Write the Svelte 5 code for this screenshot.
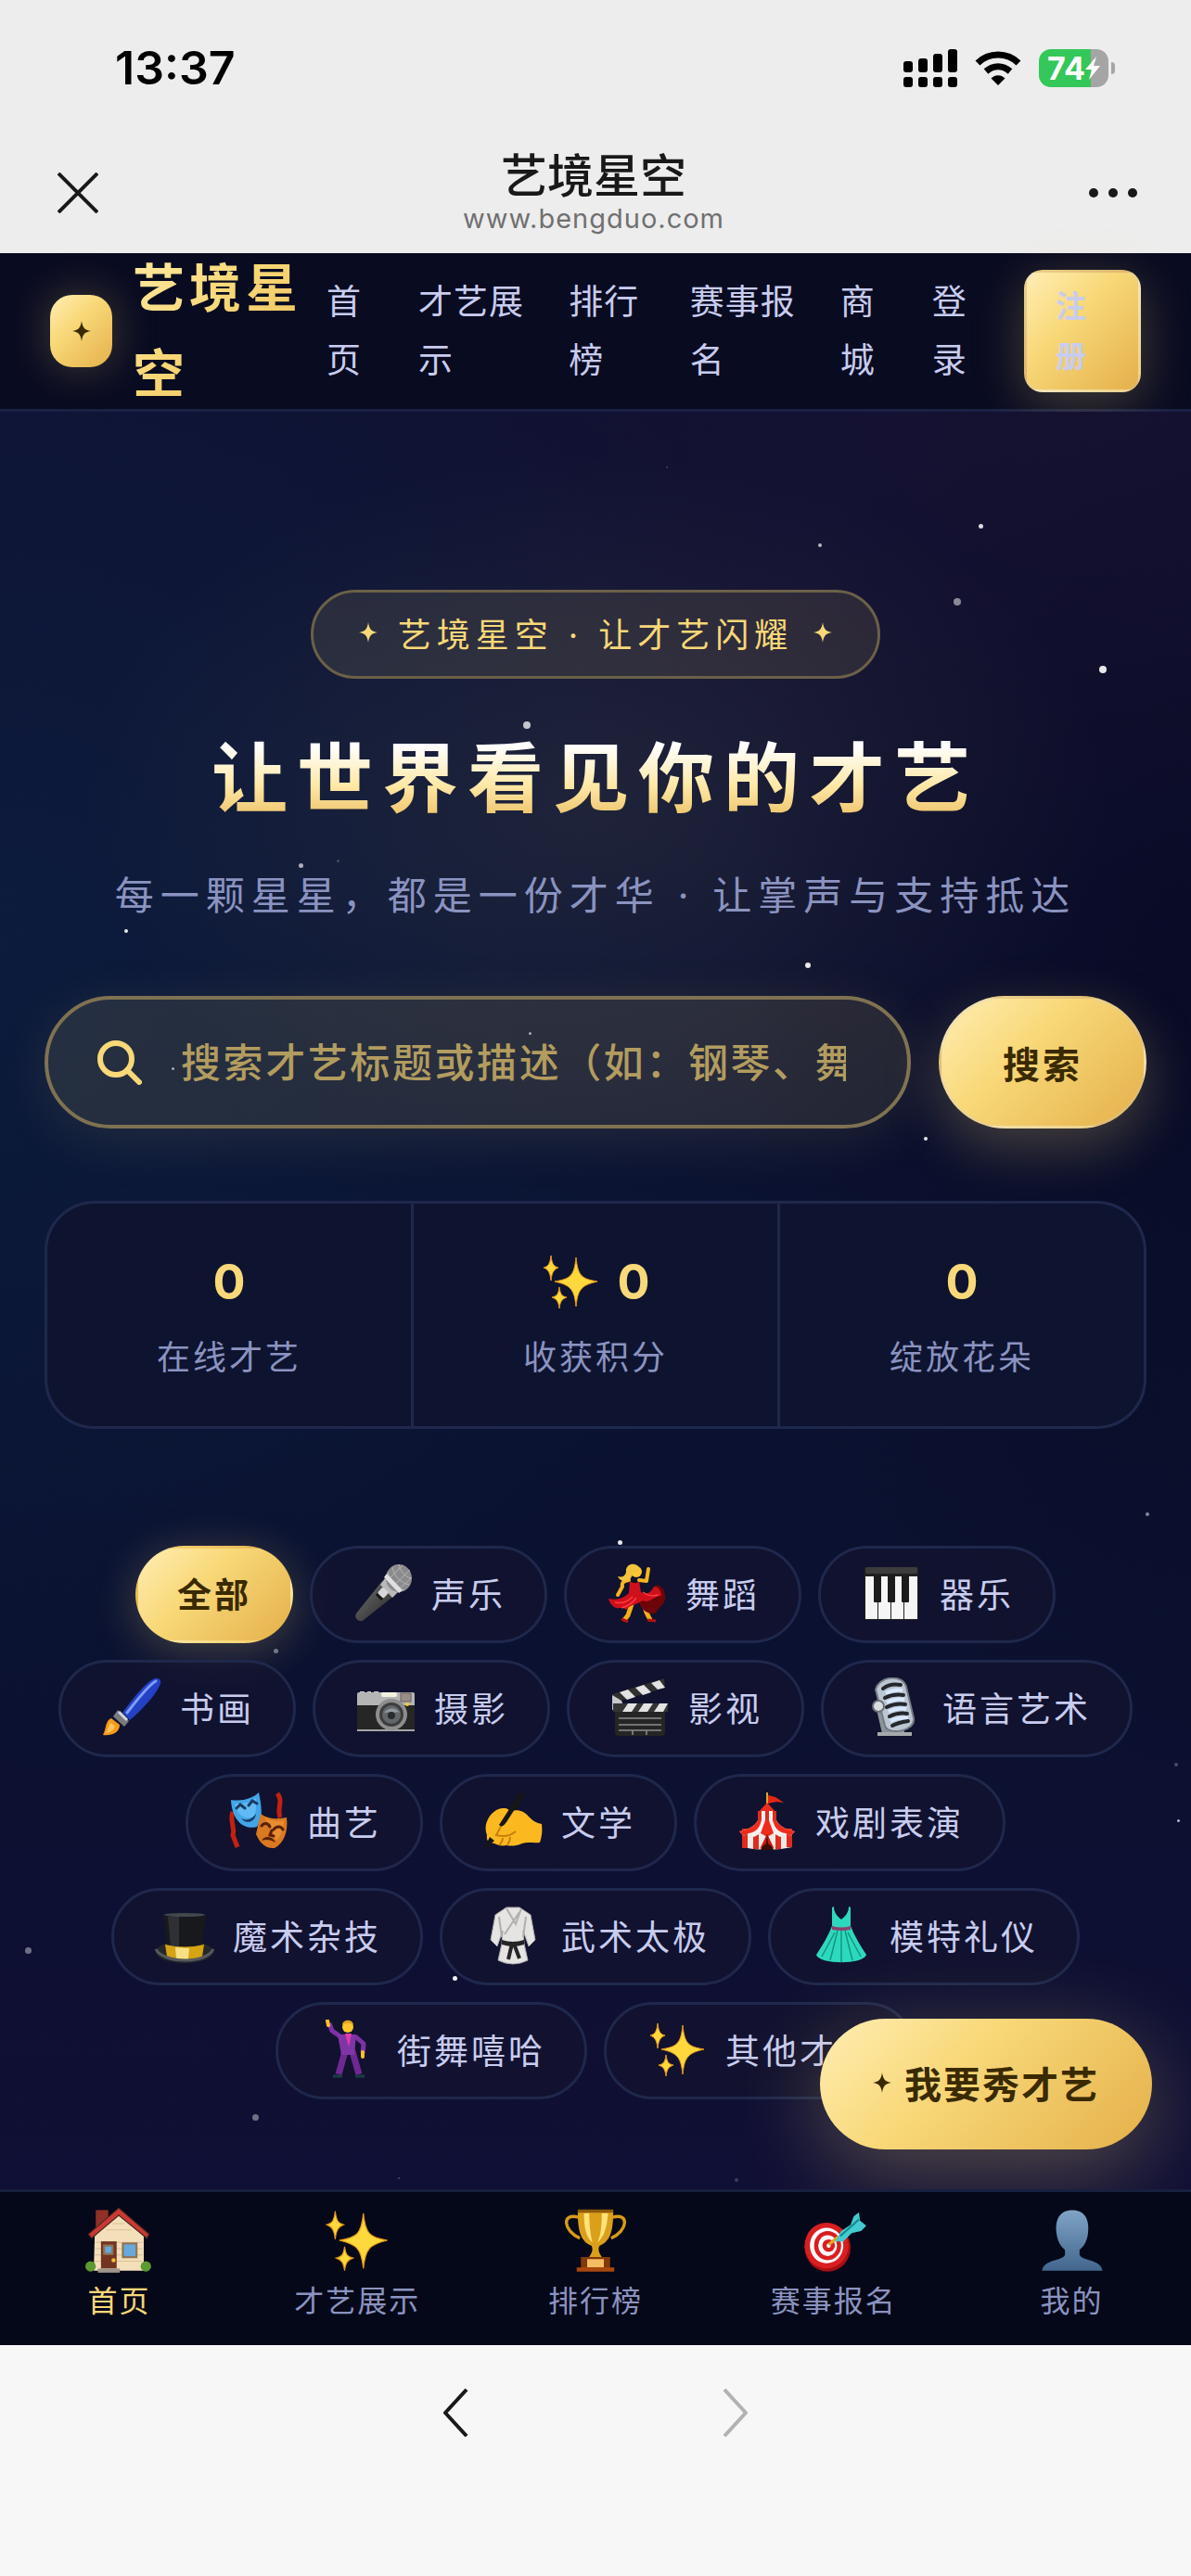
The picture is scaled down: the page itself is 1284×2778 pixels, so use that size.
<script lang="ts">
	interface Star {
		x: number;
		y: number;
		size: number;
		opacity: number;
	}

	const navLinks = ['首页', '才艺展示', '排行榜', '赛事报名', '商城', '登录'];

	const stats = [
		{ label: '在线才艺', value: 0, icon: '' },
		{ label: '收获积分', value: 0, icon: 'sparkles' },
		{ label: '绽放花朵', value: 0, icon: '' }
	];

	const categories = [
		{ name: '全部', icon: '' },
		{ name: '声乐', icon: 'mic' },
		{ name: '舞蹈', icon: 'dancer' },
		{ name: '器乐', icon: 'piano' },
		{ name: '书画', icon: 'brush' },
		{ name: '摄影', icon: 'camera' },
		{ name: '影视', icon: 'clapper' },
		{ name: '语言艺术', icon: 'studio' },
		{ name: '曲艺', icon: 'masks' },
		{ name: '文学', icon: 'writing' },
		{ name: '戏剧表演', icon: 'circus' },
		{ name: '魔术杂技', icon: 'hat' },
		{ name: '武术太极', icon: 'gi' },
		{ name: '模特礼仪', icon: 'dress' },
		{ name: '街舞嘻哈', icon: 'disco' },
		{ name: '其他才艺', icon: 'sparkles' }
	];

	const tabs = [
		{ name: '首页', icon: 'house' },
		{ name: '才艺展示', icon: 'sparkles' },
		{ name: '排行榜', icon: 'trophy' },
		{ name: '赛事报名', icon: 'target' },
		{ name: '我的', icon: 'person' }
	];

	// x and y are percentages of the sky
	const stars: Star[] = [
		{ x: 55.9, y: 3.1, size: 2, opacity: 0.2 },
		{ x: 82.2, y: 6.3, size: 5, opacity: 0.85 },
		{ x: 68.7, y: 7.4, size: 4, opacity: 0.7 },
		{ x: 80.1, y: 10.5, size: 8, opacity: 0.5 },
		{ x: 92.3, y: 14.3, size: 8, opacity: 0.9 },
		{ x: 43.9, y: 17.4, size: 8, opacity: 0.75 },
		{ x: 25.1, y: 25.4, size: 5, opacity: 0.65 },
		{ x: 28.3, y: 25.2, size: 3, opacity: 0.2 },
		{ x: 46.6, y: 27.8, size: 4, opacity: 0.15 },
		{ x: 10.4, y: 29.1, size: 4, opacity: 0.9 },
		{ x: 67.6, y: 31, size: 6, opacity: 0.9 },
		{ x: 44.4, y: 34.9, size: 3, opacity: 0.6 },
		{ x: 14.4, y: 36.9, size: 3, opacity: 0.6 },
		{ x: 77.6, y: 40.8, size: 4, opacity: 0.9 },
		{ x: 96.2, y: 61.9, size: 4, opacity: 0.5 },
		{ x: 51.9, y: 63.5, size: 5, opacity: 0.9 },
		{ x: 23, y: 69.6, size: 5, opacity: 0.4 },
		{ x: 98.6, y: 76, size: 4, opacity: 0.25 },
		{ x: 98.8, y: 79.2, size: 3, opacity: 0.7 },
		{ x: 2.1, y: 86.4, size: 7, opacity: 0.4 },
		{ x: 38, y: 88, size: 5, opacity: 0.95 },
		{ x: 21.2, y: 95.8, size: 7, opacity: 0.4 },
		{ x: 33.4, y: 99.3, size: 2, opacity: 0.25 },
		{ x: 61.7, y: 99.4, size: 4, opacity: 0.2 }
	];

	let activeCategory = $state('全部');
	let activeTab = $state('首页');
	let keyword = $state('');

	function handleSearch(event: Event) {
		event.preventDefault();
		keyword = keyword.trim();
	}
</script>

{#snippet emoji(name: string)}
	<svg class="emoji" viewBox="0 0 64 64" aria-hidden="true">
		{#if name === 'sparkles'}
			<g fill="#ffd93b" stroke="#e8961c" stroke-width="1">
				<path d="M38 6c2 20 6 23 23 26-17 4-21 8-23 27-2-19-6-23-23-27 17-3 21-6 23-26z" />
				<path d="M11 4c1 9 3 12 8 13-5 2-7 5-8 14-1-9-3-12-8-14 5-1 7-4 8-13z" />
				<path d="M20 38c1 8 3 10 8 11-5 2-7 4-8 12-1-8-3-10-8-12 5-1 7-3 8-11z" />
			</g>
		{:else if name === 'mic'}
			<defs>
				<linearGradient id="mic-body" x1="0" y1="0" x2="1" y2="1">
					<stop offset="0" stop-color="#777" />
					<stop offset="0.5" stop-color="#4b4b4b" />
					<stop offset="1" stop-color="#222" />
				</linearGradient>
			</defs>
			<path d="M31 19 45 34 11 61c-4 4-11-2-8-7z" fill="url(#mic-body)" />
			<path d="m34 16 14 15-6 6-13-14z" fill="#b9b9bb" />
			<ellipse cx="49" cy="16" rx="14" ry="15" fill="#8b8b8d" />
			<path d="M37 9c2 10 9 18 18 20M42 4c2 10 9 17 18 19M49 1c1 7 6 13 13 15M37 18 53 2M42 25 61 7M48 29 63 15" fill="none" stroke="#b4b4b6" stroke-width="1" />
			<path d="m36 11 17 18-4 3-16-17z" fill="#e0e0e2" />
			<rect x="28" y="27" width="9" height="9" rx="2" fill="#d6d6d8" transform="rotate(42 32 31)" />
			<path d="m25 33 6 6" stroke="#161616" stroke-width="3" />
		{:else if name === 'dancer'}
			<path d="m27 41-5 15-4 5M38 40l4 13 4 8" fill="none" stroke="#f4ae19" stroke-width="5" stroke-linejoin="round" />
			<path d="m15 60 7 3M43 61l9 1" stroke="#b3130e" stroke-width="3" />
			<path d="M34 40c1 10 9 15 18 14 2-7 12-10 10-20-1-8-7-12-11-10-2 9-8 12-16 13z" fill="#6d0508" />
			<path d="M24 19c4 3 7 3 10 0l2 12c5 3 10 2 14-6 5 0 8 5 8 10-8-1-12 9-20 5-7 5-13 4-18 10-4-4-9 0-13-3-3-2-5-5-6-9 9 2 16 0 22-6z" fill="#cf101b" />
			<path d="M8 42c8 2 14-1 19-6M15 48c7-2 13-6 16-11M55 34c-7 2-13 0-17-3" fill="none" stroke="#ff3b3e" stroke-width="1.5" />
			<path d="M23 18c-6 1-8 3-7 7l-5 9M34 18l8 1 2-13" fill="none" stroke="#f7b51f" stroke-width="4" stroke-linecap="round" stroke-linejoin="round" />
			<circle cx="31" cy="9" r="6" fill="#ffc62e" />
			<path d="M34 4c-5-6-15-3-14 5-1 6-6 6-9 5 3 7 13 7 15 0 1-3 4-5 8-6z" fill="#f2c33d" />
		{:else if name === 'piano'}
			<rect x="3" y="4" width="58" height="57" rx="2" fill="#202020" />
			<rect x="4" y="4" width="56" height="7" rx="2" fill="#3c3c3c" />
			<g fill="#f5f5f5">
				<rect x="4" y="14" width="13" height="46" />
				<rect x="18" y="14" width="13" height="46" />
				<rect x="32" y="14" width="13" height="46" />
				<rect x="46" y="14" width="14" height="46" />
			</g>
			<g fill="#1c1c1c">
				<rect x="13" y="13" width="8" height="29" rx="1" />
				<rect x="28" y="13" width="8" height="29" rx="1" />
				<rect x="43" y="13" width="8" height="29" rx="1" />
			</g>
		{:else if name === 'brush'}
			<path d="M22 38C34 22 48 4 57 1c5-1 8 3 5 8-5 11-19 26-32 37z" fill="#2440c4" />
			<path d="M27 38C38 24 50 8 58 4" fill="none" stroke="#7f9bff" stroke-width="3" stroke-linecap="round" />
			<path d="m17 35 12 12-5 6-12-11z" fill="#777b80" />
			<path d="m18 37 9 9" stroke="#d4d7da" stroke-width="3" />
			<path d="M10 44c-7 3-5 11-9 18 9 1 18-2 18-11z" fill="#f79a1c" />
			<path d="M9 49c-2 4-2 7-5 11 5-1 9-3 10-8z" fill="#ffc558" />
		{:else if name === 'camera'}
			<path d="M4 15h5v3h3v-3h4v3h3v-3h5v6H4z" fill="#c6c6c4" />
			<rect x="1" y="20" width="62" height="38" rx="2" fill="#262626" />
			<path d="M1 18q0-2 2-2h58q2 0 2 2v12H1z" fill="#b4b5b4" />
			<rect x="27" y="16" width="17" height="5" rx="2" fill="#f4f1df" />
			<rect x="48" y="17" width="11" height="9" fill="#9a8f88" stroke="#6a615c" />
			<path d="M1 57h62" stroke="#a5a5a5" stroke-width="2" />
			<ellipse cx="38" cy="40" rx="17" ry="17" fill="#8e8e8e" />
			<circle cx="38" cy="40" r="13" fill="#3d3d3d" />
			<circle cx="38" cy="40" r="10" fill="#62676b" />
			<path d="M30 38c5-6 13-6 17 0-4-2-6 1-9 0s-5 0-8 0z" fill="#94999d" />
			<circle cx="38" cy="41" r="4" fill="#292b2d" />
			<circle cx="55" cy="29" r="2" fill="#ffcc2f" />
		{:else if name === 'clapper'}
			<path d="m2 18 56-17 1 10L5 27z" fill="#303030" />
			<path d="m10 16 9-3 8 8-9 3zM27 11l9-3 8 8-9 3zM44 6l9-3 6 8-8 2z" fill="#e3e3e3" />
			<path d="M2 19 12 25l4 10H2z" fill="#c6c8ca" />
			<rect x="5" y="34" width="54" height="29" rx="4" fill="#252525" />
			<path d="M3 28h59v9H3z" fill="#353535" />
			<path d="M19 28h10l-6 9H13zM36 28h10l-6 9H30zM53 28h9l-5 9H47z" fill="#e3e3e3" />
			<path d="M9 44h46M9 51h46M9 57h46M24 57v5M39 57v5" stroke="#8d8d8d" stroke-width="1.5" />
		{:else if name === 'studio'}
			<path d="M15 32 21 58h22" fill="none" stroke="#8d939a" stroke-width="5" />
			<path d="M14 59h37v4H14z" fill="#a7a9ad" />
			<path d="M12 13C16-2 41-4 45 10l8 34c2 14-27 19-31 8z" fill="#bcc6d2" stroke="#737b84" stroke-width="2" />
			<path d="M23 17c6-3 13-4 18-3M24 27c6-3 14-4 19-3M26 37c6-3 14-4 19-3M28 47c6-3 13-4 19-3" fill="none" stroke="#d8e8ff" stroke-width="4" />
			<g fill="none" stroke="#24282d" stroke-width="4" stroke-linecap="round">
				<path d="M20 12c5-4 13-5 19-4M22 22c6-3 14-4 20-3M24 32c6-3 14-4 20-3M27 42c6-3 13-4 19-3M30 52c5-3 11-4 17-5" />
			</g>
			<circle cx="15" cy="31" r="6" fill="#dadde0" stroke="#6b7075" stroke-width="2" />
		{:else if name === 'masks'}
			<path d="M4 22c-4 9 3 18 0 25l5 13M52 2c7 9-1 16 3 26" fill="none" stroke="#c52110" stroke-width="5" />
			<path d="M2 9C15 11 26 7 32 1c3 15 5 28-2 37C17 42 3 32 2 9z" fill="#42a5e8" />
			<path d="M6 13c10 1 18-2 23-6 0 8 1 15-3 20-9 4-17-1-20-14z" fill="#75c8fa" opacity=".6" />
			<path d="m8 18 4-4 5 4M21 15l4-5 5 3" fill="none" stroke="#183a62" stroke-width="3" stroke-linecap="round" />
			<path d="M13 29c6 3 12 1 16-5-1 9-10 12-16 5z" fill="#183a62" />
			<path d="M34 24c8 6 18 6 28 4 2 15-3 28-13 33-10 1-16-6-20-15z" fill="#d97920" />
			<path d="M38 27c7 5 15 6 21 4 0 9-3 17-8 22z" fill="#f39a3e" opacity=".6" />
			<path d="M35 37c3-4 7-3 9 1M48 41c3-4 8-4 10 0M46 42l-2 5 4 1" fill="none" stroke="#582105" stroke-width="3" stroke-linecap="round" />
			<path d="M35 53c3-6 12-5 15 2-5-3-10-4-15-2z" fill="#582105" />
		{:else if name === 'writing'}
			<path d="M38 10 9 53" stroke="#161616" stroke-width="6" />
			<path d="M5 30C8 23 16 17 23 18c3 0 5 2 6 4 7-4 15-1 20 5 5 5 8 7 14 8 1 8 0 14-2 20-7 1-13-1-19 1-7 3-12 3-17 2-5 1-9 0-13-2-6 0-9-3-8-9-2-6-2-11 1-17z" fill="#fcb91f" />
			<path d="M28 23c-6 9-10 16-14 24 7 2 15 1 21-4" fill="none" stroke="#c97d0d" stroke-width="2" />
			<path d="M21 50c0 4-2 6-4 8M29 49c0 4-1 6-3 9" fill="none" stroke="#c97d0d" stroke-width="2" />
			<path d="M39 2c2-2 6 0 4 3L25 33c-3 4-5 6-8 3z" fill="#161616" />
			<path d="m7 49 5 4L5 60l-5 3z" fill="#161616" />
		{:else if name === 'circus'}
			<path d="M32 15V1" stroke="#d5a92d" stroke-width="2" />
			<path d="m33 4 8 2 9 6-8-1-9 2z" fill="#e32516" />
			<path d="m32 12 10 11H22z" fill="#ef2c1c" />
			<path d="M22 21h20v11H22z" fill="#f6f2ef" />
			<path d="M22 21h4v11h-4zM30 21h4v11h-4zM38 21h4v11h-4z" fill="#df2c1e" />
			<path d="M5 40h54v20q-27 6-54 0z" fill="#eeeae7" />
			<path d="M5 40h6v21H5zM17 40h6v22h-6zM41 40h6v22h-6zM53 40h6v20h-6z" fill="#df2c1e" />
			<path d="M22 31h20c3 6 10 10 20 12l-5 5-5-3-6 4-7-4-7 4-7-4-7 4-6-4-5 3-5-5c10-2 17-6 20-12z" fill="#f6f2ef" />
			<path d="M22 31h4c-2 8-6 13-14 14l-5 3-5-5c10-2 17-6 20-12zM30 31h4l5 14-7 4-7-4zM38 31h4c3 6 10 10 20 12l-5 5-5-3c-8-1-12-6-14-14z" fill="#ef2c1c" />
			<path d="m32 46 7 17H25z" fill="#3b0b07" />
			<path d="m32 46-1 10-7 6zM32 46l1 10 7 6z" fill="#c61b10" />
		{:else if name === 'hat'}
			<ellipse cx="32" cy="50" rx="31" ry="12" fill="#25272a" />
			<path d="M9 10h46l-5 40q-18 8-36 0z" fill="#18191c" />
			<path d="M14 12h12v33H17z" fill="#45484d" opacity=".5" />
			<path d="M11 42q21 5 42 0l-2 13q-19 8-38 0z" fill="#d5a414" />
			<path d="m22 45 15 1-1 12-13-1z" fill="#fff0a0" opacity=".8" />
			<path d="M1 47c7 15 54 17 62 0" fill="none" stroke="#56595d" stroke-width="3" />
			<ellipse cx="32" cy="10" rx="22" ry="2" fill="#44484d" />
		{:else if name === 'gi'}
			<path d="m25 2-12 8L8 37l7 7 6-17-1 14-4 18q16 8 32 0l-4-18-1-14 6 17 7-7-5-27-12-8z" fill="#e5e4e3" stroke="#aaa" stroke-width="1" />
			<path d="m25 3 10 17 6-17M39 7 23 31M17 12l3 22M46 12l-3 22" fill="none" stroke="#b0afae" stroke-width="2" />
			<path d="M20 37q12 4 24 0v5q-12 4-24 0z" fill="#252525" />
			<path d="m31 41-4 17M33 41l6 16" stroke="#252525" stroke-width="4" />
		{:else if name === 'dress'}
			<path d="M24 1c0 6 3 10 8 14 5-4 8-8 8-14l2 1v20c4 10 10 21 17 31-3 11-51 11-54 0 7-10 13-21 17-31V2z" fill="#2dd9bd" />
			<path d="m28 27-8 32M32 27v34M36 27l8 32M25 29 11 55M39 29l14 26" stroke="#13977f" stroke-width="1.500" />
			<path d="M22 22q10 3 20 0v4q-10 2-20 0z" fill="#8a426b" />
		{:else if name === 'disco'}
			<path d="m29 31-8 28M35 31l8 28" stroke="#6f2893" stroke-width="7" />
			<path d="M15 61h10M39 61h10" stroke="#174044" stroke-width="3" />
			<path d="m24 19-10-7-3-8M39 18l9 8-1 10" fill="none" stroke="#7d31a4" stroke-width="5" stroke-linejoin="round" />
			<path d="M20 16h20l-2 22H24z" fill="#8035a6" />
			<path d="m28 15 4 14 3-14z" fill="#e53ba9" />
			<path d="m10 6-1-5M47 35v5" stroke="#ffc12b" stroke-width="4" stroke-linecap="round" />
			<circle cx="31" cy="8" r="6" fill="#ffc62e" />
			<path d="M25 6c0-7 12-7 12 0-4-3-8-3-12 0z" fill="#e0a41b" />
		{:else if name === 'house'}
			<path d="M10 3h12v25H10z" fill="#913027" />
			<path d="M9 28 32 5l24 23v33H8z" fill="#f3dfb9" />
			<path d="M9 34h46M9 40h46M9 46h46M9 52h46M20 22h24M26 16h12" stroke="#d9c297" stroke-width="1" />
			<path d="M32 1 3 26l3 4 26-22 27 22 2-4z" fill="#c83a33" stroke="#492620" stroke-width="1" />
			<path d="M15 33h15v26H15z" fill="#733522" />
			<path d="M18 37h8v8h-8zM36 35h13v13H36z" fill="#66a9dd" stroke="#8f755a" stroke-width="2" />
			<circle cx="27" cy="51" r="2" fill="#f4bd31" />
			<circle cx="5" cy="57" r="5" fill="#5b9a31" />
			<circle cx="58" cy="57" r="5" fill="#5b9a31" />
			<path d="M12 59h21v4H12z" fill="#a0958b" />
		{:else if name === 'trophy'}
			<path d="M16 10C-1 5 1 23 17 30M48 10c17-5 15 13-1 20" fill="none" stroke="#d79b19" stroke-width="3" />
			<path d="M15 4h34c0 17-2 29-13 33-2 3-1 7 3 12H25c4-5 5-9 3-12C17 33 15 21 15 4z" fill="#dba01a" />
			<path d="M21 6c0 14 2 23 8 28-2-9-3-17-3-28zM38 6c0 13-1 21-4 28 6-5 9-14 10-28z" fill="#ffe27a" />
			<path d="M15 4h34" stroke="#8e5b0c" stroke-width="3" />
			<path d="M18 48h28v11H18z" fill="#833808" />
			<path d="M24 50h16v8H24z" fill="#f6bd62" />
			<path d="M14 58h36v4H14z" fill="#a9480d" />
		{:else if name === 'target'}
			<ellipse cx="26" cy="39" rx="22" ry="23" fill="#a70f13" />
			<ellipse cx="25" cy="37" rx="21" ry="22" fill="#d91e21" />
			<ellipse cx="25" cy="37" rx="16" ry="17" fill="#fff" />
			<ellipse cx="26" cy="37" rx="13" ry="14" fill="#d91e21" />
			<ellipse cx="26" cy="37" rx="9" ry="10" fill="#fff" />
			<circle cx="27" cy="37" r="6" fill="#d91e21" />
			<circle cx="27" cy="37" r="2" fill="#fff" />
			<path d="m27 36 9-7" stroke="#e2a52c" stroke-width="3" />
			<path d="m33 33 6-10 9-6 3-8 5-4 1 8 6 5-5 5-9 2-8 8z" fill="#42cbd0" />
			<path d="m38 28 18-16" stroke="#13878f" stroke-width="2" />
		{:else if name === 'person'}
			<defs>
				<linearGradient id="person-fill" x1="0" y1="0" x2="0" y2="1">
					<stop offset="0" stop-color="#7fa4c6" />
					<stop offset="1" stop-color="#42668d" />
				</linearGradient>
			</defs>
			<path d="M32 3c12 0 17 9 15 23-1 7-4 12-8 15v5c3 6 20 4 22 15H3c2-11 19-9 22-15v-5c-4-3-7-8-8-15C15 12 20 3 32 3z" fill="url(#person-fill)" />
		{/if}
	</svg>
{/snippet}

{#snippet fourStar()}
	<svg class="four-star" viewBox="0 0 20 22" aria-hidden="true">
		<path d="M10 0c1 7 3 10 10 11-7 1-9 4-10 11-1-7-3-10-10-11C7 10 9 7 10 0z" fill="currentColor" />
	</svg>
{/snippet}

<div class="screen">
	<div class="browser-top">
		<div class="status-bar">
			<time>13:37</time>
			<div class="status-icons">
				<svg width="58" height="41" viewBox="0 0 58 41" aria-hidden="true">
					<rect x="0" y="13" width="10" height="12" rx="3" />
					<rect x="16" y="10" width="10" height="15" rx="3" />
					<rect x="32" y="5" width="10" height="20" rx="3" />
					<rect x="48" y="0" width="10" height="25" rx="3" />
					<rect x="0" y="30" width="10" height="11" rx="3" />
					<rect x="16" y="30" width="10" height="11" rx="3" />
					<rect x="32" y="30" width="10" height="11" rx="3" />
					<rect x="48" y="30" width="10" height="11" rx="3" />
				</svg>
				<svg width="50" height="37" viewBox="0 0 50 37" aria-hidden="true">
					<path d="M3 13C15 1 35 1 47 13M12 22c8-7 18-7 26 0" fill="none" stroke="#000" stroke-width="7" />
					<path d="M17.500 29.500c4-4.500 11-4.500 15 0L25 37z" />
				</svg>
				<div class="battery">
					<span>74</span>
					<svg width="16" height="25" viewBox="0 0 16 25" aria-hidden="true">
						<path d="M12 0 0 14h7L4 25 16 10H9z" fill="#fff" />
					</svg>
				</div>
			</div>
		</div>
		<div class="title-bar">
			<button type="button" aria-label="关闭">
				<svg width="44" height="44" viewBox="0 0 44 44">
					<path d="m1 1 42 42M43 1 1 43" fill="none" stroke="#191919" stroke-width="4" />
				</svg>
			</button>
			<div class="page-title">
				<strong>艺境星空</strong>
				<span>www.bengduo.com</span>
			</div>
			<button type="button" aria-label="更多">
				<svg width="52" height="12" viewBox="0 0 52 12">
					<circle cx="5" cy="6" r="5" fill="#191919" />
					<circle cx="26" cy="6" r="5" fill="#191919" />
					<circle cx="47" cy="6" r="5" fill="#191919" />
				</svg>
			</button>
		</div>
	</div>

	<header class="site-header">
		<a class="brand" href="#home">
			<span class="brand-logo">{@render fourStar()}</span>
			<span class="brand-name">艺境星空</span>
		</a>
		<nav class="site-nav">
			{#each navLinks as link}
				<a href="#{link}">{link}</a>
			{/each}
			<a class="register" href="#register">注册</a>
		</nav>
	</header>

	<main class="sky">
		<section class="hero">
			<p class="badge">{@render fourStar()}<span>艺境星空 · 让才艺闪耀</span>{@render fourStar()}</p>
			<h1>让世界看见你的才艺</h1>
			<p class="subtitle">每一颗星星，都是一份才华 · 让掌声与支持抵达</p>
		</section>

		<form class="search" onsubmit={handleSearch}>
			<label class="search-box">
				<svg width="48" height="48" viewBox="0 0 48 48" aria-hidden="true">
					<circle cx="20" cy="20" r="17" fill="none" stroke="#f8d878" stroke-width="6" />
					<path d="m32 32 13 13" stroke="#f8d878" stroke-width="6" stroke-linecap="round" />
				</svg>
				<input
					type="text"
					aria-label="搜索才艺"
					placeholder="搜索才艺标题或描述（如：钢琴、舞蹈）"
					bind:value={keyword}
				/>
			</label>
			<button type="submit">搜索</button>
		</form>

		<section class="stats">
			{#each stats as stat}
				<div class="stat">
					<div class="stat-value">
						{#if stat.icon}{@render emoji(stat.icon)}{/if}
						<span>{stat.value}</span>
					</div>
					<div class="stat-label">{stat.label}</div>
				</div>
			{/each}
		</section>

		<section class="categories">
			{#each categories as category}
				<button
					type="button"
					class="chip"
					class:active={category.name === activeCategory}
					onclick={() => (activeCategory = category.name)}
				>
					{#if category.icon}{@render emoji(category.icon)}{/if}
					<span>{category.name}</span>
				</button>
			{/each}
		</section>

		<div class="stars" aria-hidden="true">
			{#each stars as star}
				<i style="left: {star.x}%; top: {star.y}%; width: {star.size}px; height: {star.size}px; opacity: {star.opacity}"></i>
			{/each}
		</div>

		<a class="show-talent" href="#publish">{@render fourStar()}<span>我要秀才艺</span></a>
	</main>

	<nav class="tab-bar">
		{#each tabs as tab}
			<a
				href="#{tab.icon}"
				class:active={tab.name === activeTab}
				onclick={() => (activeTab = tab.name)}
			>
				{@render emoji(tab.icon)}
				<span>{tab.name}</span>
			</a>
		{/each}
	</nav>

	<div class="browser-bottom">
		<button type="button" aria-label="后退">
			<svg width="28" height="52" viewBox="0 0 28 52">
				<path d="M26 1 3 26l23 25" fill="none" stroke="#191919" stroke-width="4" stroke-linejoin="round" />
			</svg>
		</button>
		<button type="button" aria-label="前进" disabled>
			<svg width="28" height="52" viewBox="0 0 28 52">
				<path d="m2 1 23 25L2 51" fill="none" stroke="#b2b2b2" stroke-width="4" stroke-linejoin="round" />
			</svg>
		</button>
	</div>
</div>

<style>
	:global(body) {
		margin: 0;
		background: #f7f7f7;
	}

	.screen {
		--gold: linear-gradient(135deg, #ffedb3 0%, #f8d878 40%, #e4b04a 100%);
		--line: #1f284c;
		display: flex;
		flex-direction: column;
		min-height: 100vh;
		font-family: Inter, 'Noto Sans CJK SC', sans-serif;
		color: #c8ccee;
	}

	.screen *,
	.screen {
		box-sizing: border-box;
	}

	a {
		color: inherit;
		text-decoration: none;
	}

	button {
		font: inherit;
		border: 0;
		background: none;
		cursor: pointer;
	}

	svg {
		display: block;
		flex: none;
	}

	.emoji {
		width: 64px;
		height: 64px;
	}

	.four-star {
		width: 20px;
		height: 22px;
	}

	.browser-top {
		background: #ededed;
		color: #000000;
	}

	.status-bar {
		display: flex;
		align-items: center;
		justify-content: space-between;
		height: 146px;
		padding: 0 82px 0 124px;
	}

	.status-bar time {
		font-size: 50px;
		font-weight: 600;
	}

	.status-icons {
		display: flex;
		align-items: center;
		gap: 19px;
	}

	.battery {
		position: relative;
		display: flex;
		align-items: center;
		justify-content: center;
		width: 75px;
		height: 41px;
		margin-right: 7px;
		border-radius: 13px;
		background: linear-gradient(90deg, #34c759 0 56px, #a5a5a5 56px);
		color: #ffffff;
		font-size: 34px;
		font-weight: 700;
	}

	.battery::after {
		content: '';
		position: absolute;
		right: -7px;
		top: 14px;
		width: 4px;
		height: 13px;
		border-radius: 0 4px 4px 0;
		background: #a5a5a5;
	}

	.title-bar {
		display: flex;
		align-items: center;
		justify-content: space-between;
		height: 127px;
		padding: 0 58px 4px 62px;
	}

	.title-bar button {
		display: flex;
		padding: 0;
	}

	.page-title {
		display: flex;
		flex-direction: column;
		align-items: center;
	}

	.page-title strong {
		font-size: 50px;
		font-weight: 500;
		line-height: 56px;
		color: #191919;
	}

	.page-title span {
		font-size: 29px;
		line-height: 36px;
		letter-spacing: 1px;
		color: #707070;
	}

	.site-header {
		display: flex;
		align-items: center;
		gap: 18px;
		padding: 18px 54px;
		border-bottom: 3px solid #1a2144;
		background: #090b21;
	}

	.brand {
		display: flex;
		flex: 0 1 280px;
		align-items: center;
		gap: 22px;
	}

	.brand-logo {
		display: flex;
		flex: none;
		align-items: center;
		justify-content: center;
		width: 67px;
		height: 78px;
		border-radius: 24px;
		background: var(--gold);
		box-shadow: 0 0 48px rgba(248, 216, 120, 0.25);
		color: #3a2a00;
	}

	/* the two-line name is taller than the bar and must not stretch it */
	.brand-name {
		margin: -26px 0;
		font-size: 56px;
		font-weight: 700;
		line-height: 92px;
		letter-spacing: 5px;
		background: linear-gradient(135deg, #ffe9a3, #f8d878 40%, #e8b850);
		background-clip: text;
		color: transparent;
	}

	.site-nav {
		display: grid;
		flex: 1;
		grid-template-columns:
			minmax(0, 2fr) minmax(0, 4fr) minmax(0, 3fr) minmax(0, 4fr) minmax(0, 2fr)
			minmax(0, 2fr) minmax(0, 4fr);
		align-items: center;
		gap: 36px;
		font-size: 37px;
		line-height: 63px;
		letter-spacing: 1px;
	}

	.register {
		padding: 9px 31px;
		border: 3px solid rgba(200, 204, 238, 0.2);
		border-radius: 20px;
		background: var(--gold);
		box-shadow: 0 12px 54px rgba(248, 216, 120, 0.25);
		font-size: 33px;
		font-weight: 700;
		line-height: 54px;
	}

	.sky {
		position: relative;
		padding: 192px 48px 97px;
		background:
			radial-gradient(ellipse 560px 380px at 50% 22%, rgba(248, 216, 120, 0.08), transparent),
			radial-gradient(ellipse 900px 900px at 0% 30%, rgba(12, 48, 84, 0.32), transparent),
			radial-gradient(ellipse 800px 500px at 90% 0%, rgba(36, 20, 52, 0.35), transparent),
			radial-gradient(ellipse 500px 900px at 100% 32%, rgba(6, 4, 24, 0.45), transparent),
			linear-gradient(180deg, #0f1132 0%, #0b1231 45%, #0b1130 70%, #100f35 100%);
	}

	.stars {
		position: absolute;
		inset: 0;
		pointer-events: none;
	}

	.stars i {
		position: absolute;
		border-radius: 50%;
		background: #ffffff;
	}

	.hero {
		display: flex;
		flex-direction: column;
		align-items: center;
		text-align: center;
	}

	.badge {
		display: flex;
		align-items: center;
		gap: 22px;
		height: 96px;
		margin: 0 0 48px;
		padding: 0 49px 4px;
		border: 3px solid #6b6048;
		border-radius: 48px;
		background: rgba(248, 216, 120, 0.1);
		font-size: 36px;
		letter-spacing: 6px;
		color: #f8d878;
	}

	h1 {
		margin: 0 0 24px;
		font-size: 82px;
		font-weight: 700;
		line-height: 120px;
		letter-spacing: 10px;
		background: linear-gradient(180deg, #ffffff 20%, #ffe9a8 55%, #e4b04a 100%);
		background-clip: text;
		color: transparent;
	}

	.subtitle {
		margin: 0 0 66px;
		font-size: 42px;
		line-height: 84px;
		letter-spacing: 7px;
		white-space: nowrap;
		color: #8b93c0;
	}

	.search {
		display: flex;
		gap: 30px;
		margin-bottom: 78px;
	}

	.search-box {
		display: flex;
		flex: 1;
		align-items: center;
		gap: 42px;
		min-width: 0;
		height: 143px;
		padding: 0 66px 0 53px;
		border: 4px solid #7f7252;
		border-radius: 72px;
		background: rgba(248, 216, 120, 0.11);
		box-shadow: 0 12px 60px rgba(248, 216, 120, 0.1);
	}

	.search-box input {
		flex: 1;
		min-width: 0;
		padding: 0;
		border: 0;
		outline: none;
		background: none;
		font: inherit;
		font-size: 43px;
		font-weight: 500;
		letter-spacing: 0.06em;
		color: #f8d878;
	}

	.search-box input::placeholder {
		color: #b29c5f;
		opacity: 1;
	}

	.search button {
		padding: 0 66px;
		border: 3px solid rgba(200, 204, 238, 0.2);
		border-radius: 72px;
		background: var(--gold);
		box-shadow: 0 20px 60px rgba(248, 216, 120, 0.25);
		font-size: 40px;
		font-weight: 700;
		letter-spacing: 3px;
		color: #3a2a00;
	}

	.stats {
		display: grid;
		grid-template-columns: repeat(3, 1fr);
		gap: 3px;
		margin-bottom: 126px;
		border: 3px solid var(--line);
		border-radius: 54px;
		background: var(--line);
		overflow: hidden;
	}

	.stat {
		display: flex;
		flex-direction: column;
		align-items: center;
		padding: 46px 0 44px;
		background: #0e1430;
	}

	.stat-value {
		display: flex;
		align-items: center;
		gap: 18px;
		height: 76px;
		font-size: 52px;
		font-weight: 700;
		color: #f8d878;
	}

	.stat-label {
		padding-top: 14px;
		font-size: 36px;
		line-height: 60px;
		letter-spacing: 3px;
		color: #8b93c0;
	}

	.categories {
		display: flex;
		flex-wrap: wrap;
		justify-content: center;
		gap: 18px;
	}

	.chip {
		display: flex;
		align-items: center;
		gap: 20px;
		height: 105px;
		padding: 0 42px 3px;
		border: 3px solid var(--line);
		border-radius: 54px;
		background: rgba(20, 20, 46, 0.6);
		font-size: 37px;
		letter-spacing: 3px;
		color: #c8ccee;
	}

	.chip .emoji {
		margin-left: 2px;
	}

	.chip.active {
		border-color: transparent;
		background: var(--gold);
		box-shadow: 0 8px 48px rgba(248, 216, 120, 0.25);
		font-weight: 700;
		color: #3a2a00;
	}

	.show-talent {
		position: absolute;
		right: 42px;
		bottom: 43px;
		display: flex;
		align-items: center;
		gap: 14px;
		height: 141px;
		padding: 0 57px 3px;
		border-radius: 72px;
		background: var(--gold);
		box-shadow: 0 24px 96px rgba(248, 216, 120, 0.3);
		font-size: 40px;
		font-weight: 700;
		letter-spacing: 2px;
		color: #3a2a00;
	}

	.tab-bar {
		position: relative;
		display: grid;
		grid-template-columns: repeat(5, 1fr);
		padding: 16px 0 21px;
		border-top: 3px solid #182040;
		background: #050818;
	}

	.tab-bar a {
		display: flex;
		flex-direction: column;
		align-items: center;
		gap: 4px;
		font-size: 32px;
		line-height: 52px;
		letter-spacing: 2px;
		color: #8b93c0;
	}

	.tab-bar a.active {
		color: #f8d878;
	}

	.tab-bar .emoji {
		width: 72px;
		height: 72px;
	}

	.browser-bottom {
		display: flex;
		flex: 1;
		align-items: flex-start;
		justify-content: center;
		gap: 274px;
		min-height: 248px;
		padding-top: 47px;
		background: #f7f7f7;
	}

	.browser-bottom button {
		display: flex;
		padding: 0;
	}
</style>
